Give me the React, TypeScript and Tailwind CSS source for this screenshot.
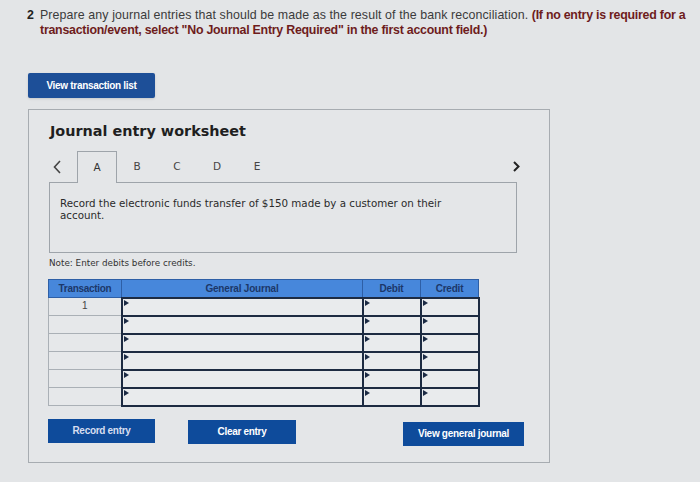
const rows = [1, 2, 3, 4, 5, 6];

const Marker = () => (
  <span className="absolute left-[1px] top-[1px] w-0 h-0 border-t-[3px] border-b-[3px] border-l-[5px] border-t-transparent border-b-transparent border-l-[#1b2a44]" />
);

export default function App() {
  return (
    <div className="w-[700px] h-[482px] overflow-hidden bg-[#e3e5e7] font-['Liberation_Sans',Arial,sans-serif]">
      {/* question */}
      <div className="flex pl-[27px] pt-[8px] text-[12.4px] leading-[15px] text-[#3b3b3b]">
        <span className="w-[13px] shrink-0 font-bold text-[#222]">2</span>
        <p className="whitespace-nowrap">
          <span className="tracking-[0.1px]">
            Prepare any journal entries that should be made as the result of the bank reconciliation.
          </span>{" "}
          <b className="text-[#6e1c1c] tracking-[-0.25px]">
            (If no entry is required for a<br />
            transaction/event, select "No Journal Entry Required" in the first account field.)
          </b>
        </p>
      </div>

      <button className="ml-[28px] mt-[35px] w-[127px] h-[25px] rounded-[2px] bg-[#1d4f98] text-white text-[10px] font-bold tracking-[-0.3px] shadow-sm">
        View transaction list
      </button>

      {/* worksheet panel */}
      <div className="ml-[28px] mt-[11px] w-[522px] h-[354px] border border-[#a7acb1] bg-[#e4e6e8] pl-[20px] pt-[12px] font-['DejaVu_Sans',Verdana,sans-serif]">
        <h2 className="text-[14.4px] leading-[18px] font-bold text-[#1f1f1f] pl-[1px]">Journal entry worksheet</h2>

        <div className="mt-[11px] w-[468px] flex items-end h-[31px] relative">
          <span className="w-[28px] h-[31px] flex items-center pl-[4px]">
            <svg width="8" height="14" viewBox="0 0 8 14">
              <path d="M7 1 L1.5 7 L7 13" fill="none" stroke="#444" strokeWidth="1.6" />
            </svg>
          </span>
          <div className="w-[40px] h-[32px] -mb-px border border-b-0 border-[#9ea4aa] bg-[#e4e6e8] flex items-center justify-center text-[10.5px] text-[#333] relative z-10">
            A
          </div>
          {["B", "C", "D", "E"].map((t) => (
            <div key={t} className="w-[40px] h-[31px] flex items-center justify-center text-[10.5px] text-[#444]">
              {t}
            </div>
          ))}
          <span className="ml-auto h-[31px] flex items-center mr-[-3px] pb-[1px]">
            <svg width="7" height="11" viewBox="0 0 7 11">
              <path d="M1 1 L5.5 5.5 L1 10" fill="none" stroke="#222" strokeWidth="2" />
            </svg>
          </span>
        </div>
        <div className="w-[468px] h-[71px] border border-[#9ea4aa] pl-[10px] pt-[14px] text-[10.3px] leading-[12px] text-[#2a2a2a]">
          Record the electronic funds transfer of $150 made by a customer on their
          <br />
          account.
        </div>

        <p className="mt-[5px] text-[8.8px] leading-[10px] text-[#333]">Note: Enter debits before credits.</p>

        <table className="mt-[11px] -ml-px border-collapse font-['Liberation_Sans',Arial,sans-serif]">
          <thead>
            <tr className="h-[18px] bg-[#4787db] text-[10px] font-bold text-[#1c3769]">
              <th className="w-[73px] border border-[#2e5fa6] p-0 tracking-[-0.3px]">Transaction</th>
              <th className="w-[241px] border border-[#2e5fa6] p-0 tracking-[-0.2px]">General Journal</th>
              <th className="w-[58px] border border-[#2e5fa6] p-0 tracking-[-0.2px]">Debit</th>
              <th className="w-[58px] border border-[#2e5fa6] p-0 tracking-[-0.2px]">Credit</th>
            </tr>
          </thead>
          <tbody>
            {rows.map((r) => (
              <tr key={r} className="h-[18px]">
                <td className="border border-[#aab0b6] bg-[#e6e8ea] p-0 text-center align-top text-[10px] leading-[16px] text-[#444]">
                  {r === 1 ? "1" : ""}
                </td>
                <td className="relative border-2 border-[#1d2b42] bg-[#e9ebed] p-0">
                  <Marker />
                </td>
                <td className="relative border-2 border-[#1d2b42] bg-[#e9ebed] p-0">
                  <Marker />
                </td>
                <td className="relative border-2 border-[#1d2b42] bg-[#e9ebed] p-0">
                  <Marker />
                </td>
              </tr>
            ))}
          </tbody>
        </table>

        <div className="mt-[12px] -ml-px flex items-start font-['Liberation_Sans',Arial,sans-serif] text-[10px] font-bold text-white tracking-[-0.3px]">
          <button className="w-[107px] h-[24px] bg-[#0e4b9b] text-[#d7def0]">Record entry</button>
          <button className="ml-[33px] mt-[1px] w-[108px] h-[24px] bg-[#0e4b9b]">Clear entry</button>
          <button className="ml-[107px] mt-[3px] w-[121px] h-[24px] bg-[#0e4b9b]">View general journal</button>
        </div>
      </div>
    </div>
  );
}
